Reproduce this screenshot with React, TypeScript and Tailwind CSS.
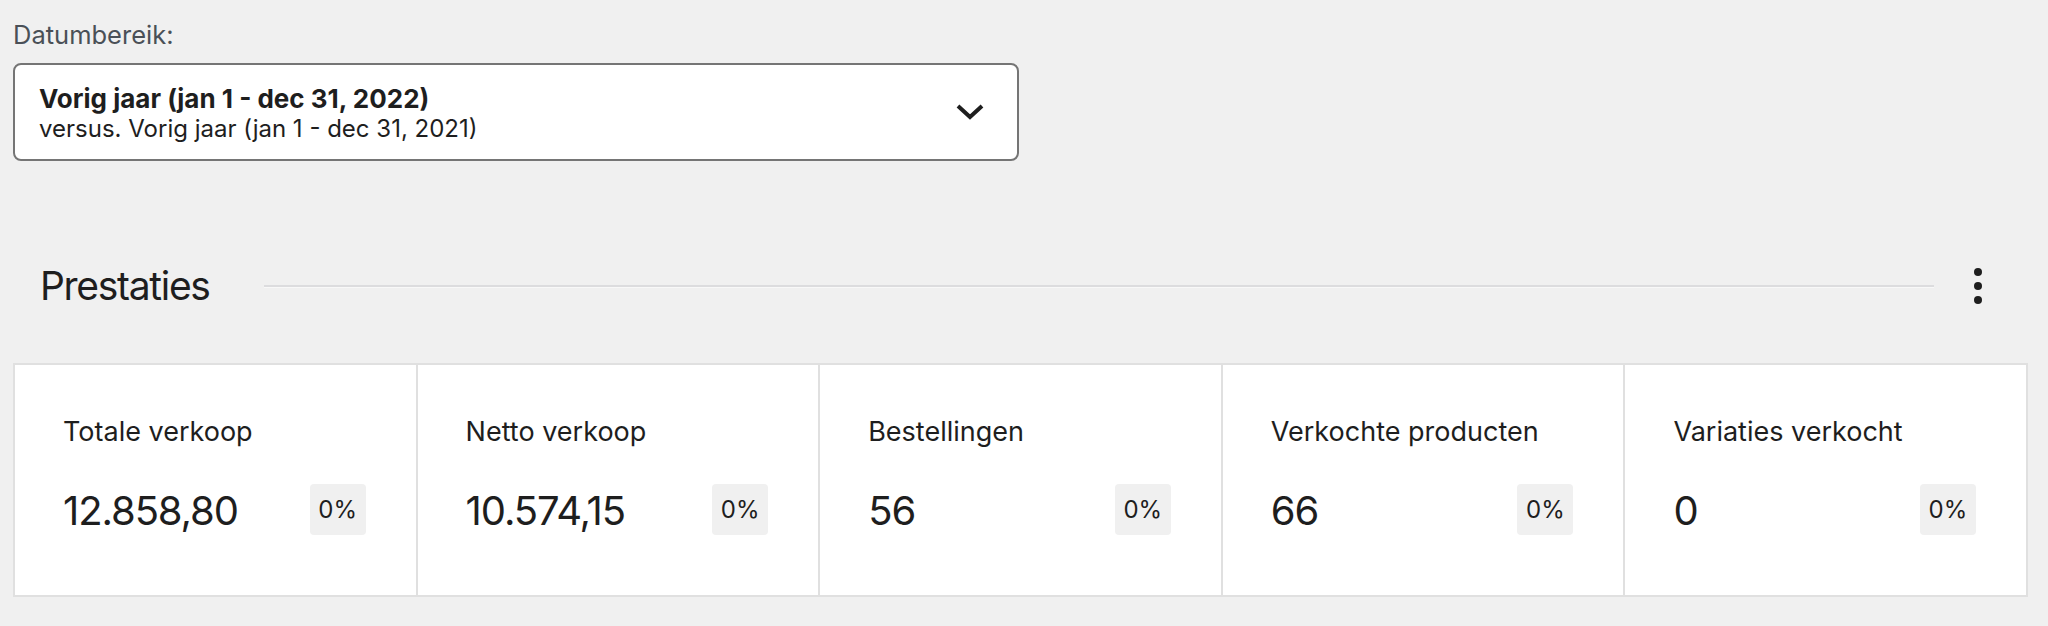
const stats = [
  { label: "Totale verkoop", value: "12.858,80", delta: "0%" },
  { label: "Netto verkoop", value: "10.574,15", delta: "0%" },
  { label: "Bestellingen", value: "56", delta: "0%" },
  { label: "Verkochte producten", value: "66", delta: "0%" },
  { label: "Variaties verkocht", value: "0", delta: "0%" },
];

const ChevronDown = () => (
  <svg width="30" height="18" viewBox="0 0 30 18" fill="none">
    <polyline
      points="3,3 15,14 27,3"
      stroke="#1e1e1e"
      strokeWidth="4"
      strokeLinejoin="miter"
    />
  </svg>
);

const MoreVertical = () => (
  <svg width="12" height="40" viewBox="0 0 12 40" fill="#1e1e1e">
    <circle cx="6" cy="6" r="4" />
    <circle cx="6" cy="20" r="4" />
    <circle cx="6" cy="34" r="4" />
  </svg>
);

const StatCard = ({
  label,
  value,
  delta,
  last,
}: {
  label: string;
  value: string;
  delta: string;
  last?: boolean;
}) => {
  return (
    <div
      className={`flex-1 flex flex-col pl-[48px] pr-[50px] pt-[51px] pb-[60px] ${
        last ? "" : "border-r-2 border-[#e0e0e0]"
      }`}
    >
      <div className="text-[27px] leading-[32px] text-[#1e1e1e]">{label}</div>
      <div className="mt-[36px] flex items-center justify-between h-[51px]">
        <span className="text-[40px] leading-[48px] text-[#1e1e1e] tracking-[-1.1px] pt-[3px]">
          {value}
        </span>
        <span className="w-[56px] h-[51px] rounded-[4px] bg-[#f0f0f0] flex items-center justify-center text-[24px] text-[#1e1e1e]">
          {delta}
        </span>
      </div>
    </div>
  );
};

export default function App() {
  return (
    <div className="min-h-screen w-[2048px] bg-[#f0f0f0] font-['Inter','Noto_Sans',sans-serif] text-[#1e1e1e]">
      <div className="pl-[13px] pt-[18px]">
        <div className="text-[25.5px] leading-[34px] text-[#4a5057]">Datumbereik:</div>
        <button className="mt-[11px] w-[1006px] h-[98px] border-2 border-[#757575] rounded-[8px] bg-white flex items-center justify-between pl-[24px] pr-[32px] text-left">
          <div className="flex flex-col pt-[3px]">
            <span className="text-[26px] leading-[30px] font-bold text-[#1e1e1e]">
              Vorig jaar (jan 1 - dec 31, 2022)
            </span>
            <span className="text-[24px] leading-[30px] text-[#1e1e1e]">
              versus. Vorig jaar (jan 1 - dec 31, 2021)
            </span>
          </div>
          <ChevronDown />
        </button>
      </div>

      <div className="mt-[101px] h-[48px] flex items-center pl-[40px] pr-[46px]">
        <h2 className="text-[39px] leading-[48px] font-normal text-[#1e1e1e] tracking-[-1.3px]">
          Prestaties
        </h2>
        <div className="flex-1 ml-[54px] border-t-2 border-b border-t-[#dcdcde] border-b-[#f8f8f8]" />
        <button className="ml-[20px] w-[48px] h-[48px] flex items-center justify-center">
          <MoreVertical />
        </button>
      </div>

      <div className="mt-[53px] mx-[13px] w-[2015px] border-2 border-[#e0e0e0] bg-white flex">
        {stats.map((s, i) => (
          <StatCard
            key={s.label}
            label={s.label}
            value={s.value}
            delta={s.delta}
            last={i === stats.length - 1}
          />
        ))}
      </div>
    </div>
  );
}
